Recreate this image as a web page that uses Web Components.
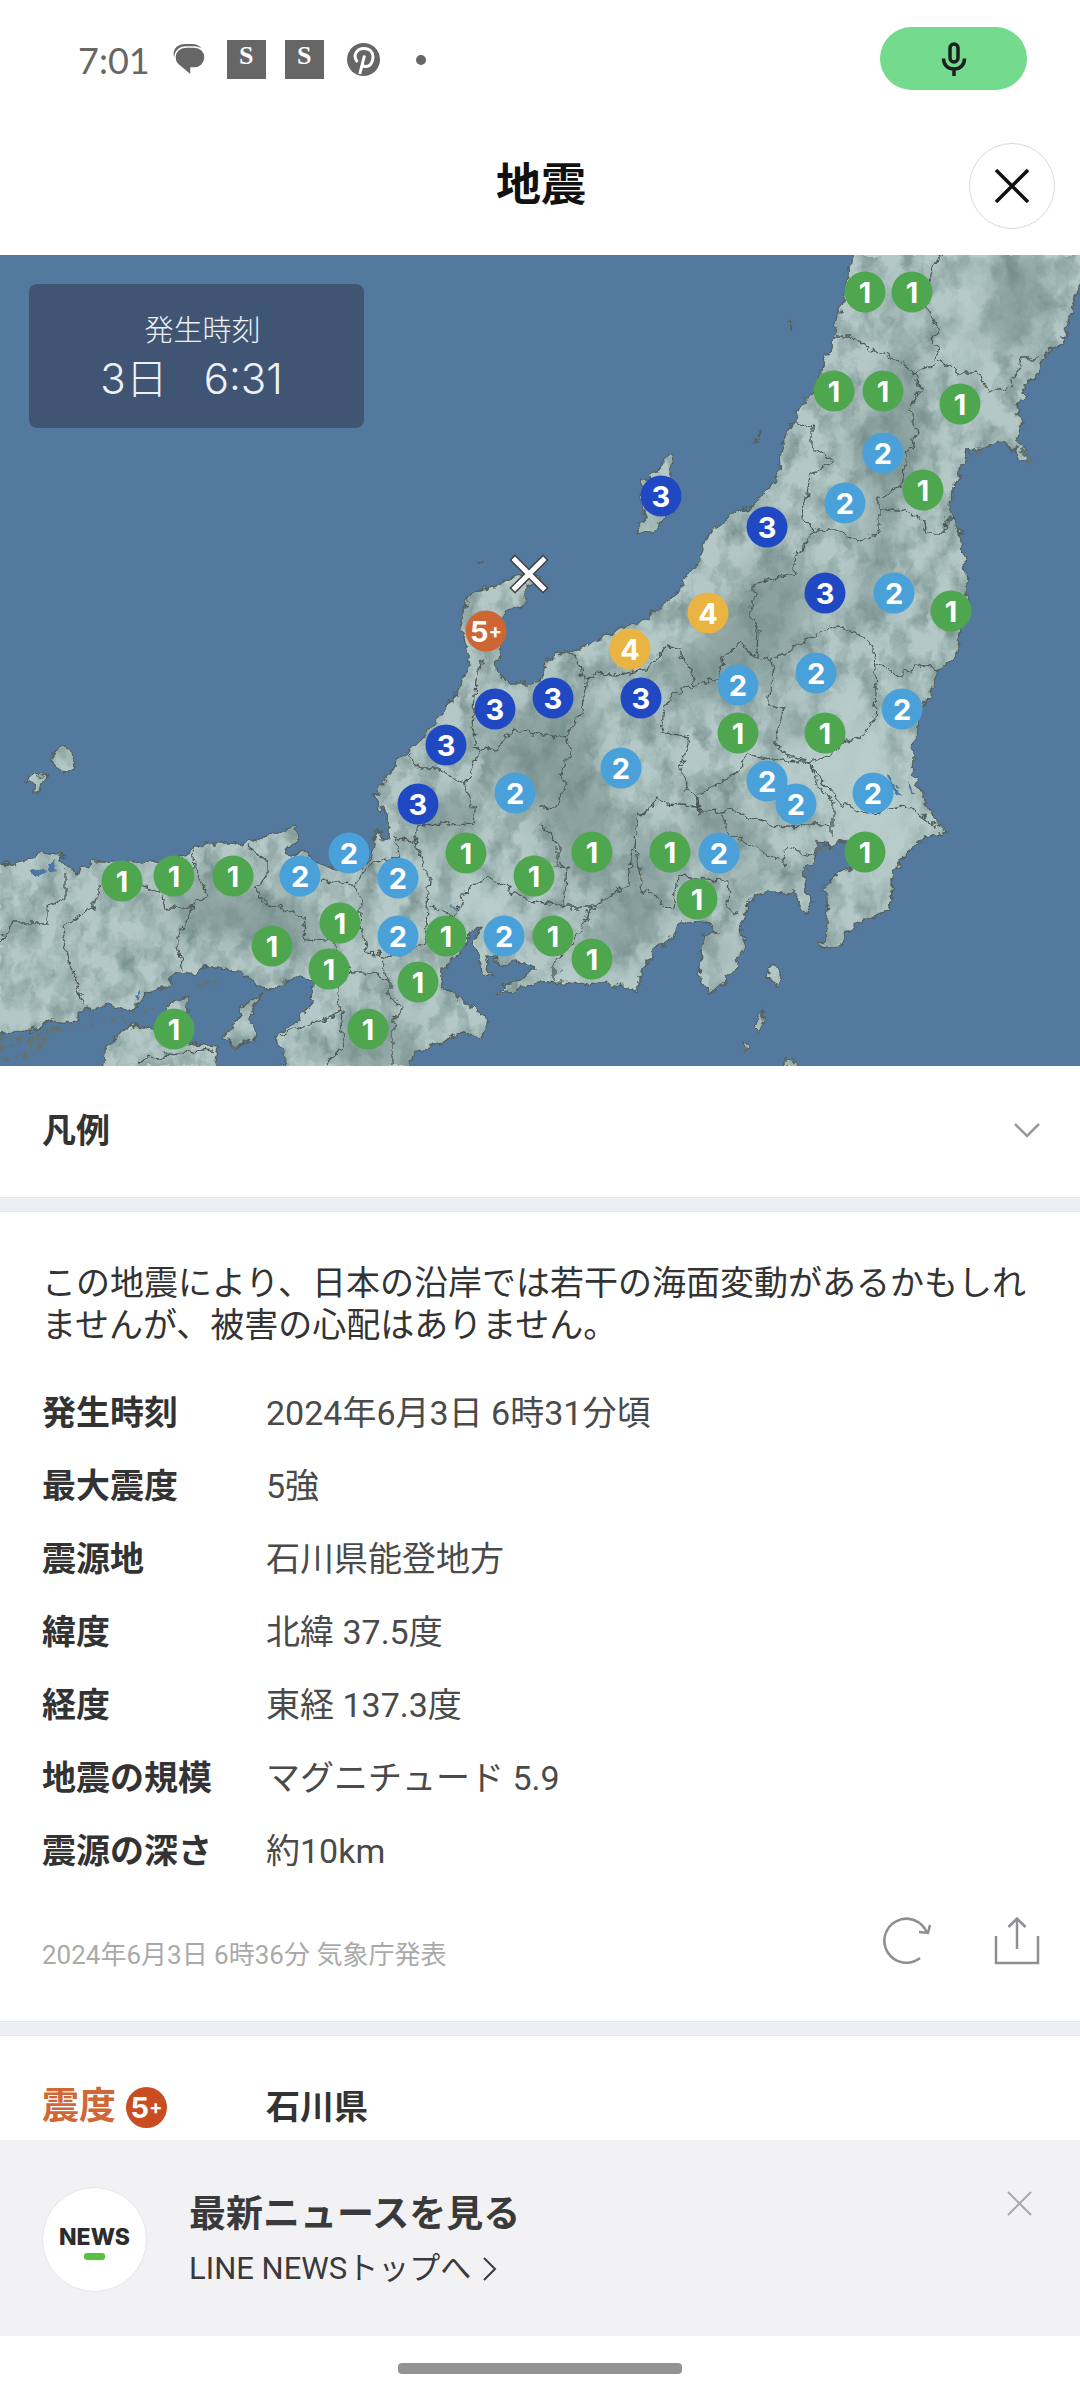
<!DOCTYPE html>
<html lang="ja">
<head>
<meta charset="utf-8">
<meta name="viewport" content="width=device-width, initial-scale=1">
<title>地震</title>
<style>
  body {
    margin: 0;
    background: #fff;
    color: #333;
    font-family: Roboto, "Noto Sans CJK JP", sans-serif;
  }
</style>
</head>
<body>
<quake-app></quake-app>

<script>
// intensity, x, y on the 1080x811 map
const POINTS = [
  ["1", 865, 37], ["1", 912, 37], ["1", 834, 136], ["1", 883, 136], ["1", 960, 149],
  ["2", 883, 198], ["1", 923, 235], ["2", 845, 248], ["3", 661, 241], ["3", 767, 272],
  ["3", 825, 338], ["2", 894, 338], ["1", 951, 356], ["4", 708, 358], ["4", 630, 394],
  ["5+", 486, 376], ["2", 738, 430], ["2", 816, 418], ["2", 902, 454], ["3", 641, 443],
  ["1", 738, 478], ["1", 825, 478], ["3", 553, 443], ["3", 495, 454], ["3", 446, 490],
  ["3", 418, 549], ["2", 515, 538], ["2", 621, 513], ["2", 767, 526], ["2", 796, 549],
  ["2", 873, 538], ["1", 865, 597], ["1", 122, 626], ["1", 174, 621], ["1", 233, 621],
  ["2", 300, 621], ["2", 349, 598], ["2", 398, 623], ["1", 466, 598], ["1", 534, 621],
  ["1", 592, 597], ["1", 670, 597], ["2", 719, 598], ["1", 697, 644], ["1", 340, 668],
  ["2", 398, 681], ["1", 446, 681], ["2", 504, 681], ["1", 553, 681], ["1", 592, 704],
  ["1", 272, 691], ["1", 329, 714], ["1", 418, 727], ["1", 174, 774], ["1", 368, 774]
];

const LEVEL_COLORS = { "1": "#4ea64e", "2": "#4aa1da", "3": "#2048c2", "4": "#e9b442", "5+": "#ce6634" };

const DETAILS = [
  ["発生時刻", "2024年6月3日 6時31分頃"],
  ["最大震度", "5強"],
  ["震源地", "石川県能登地方"],
  ["緯度", "北緯 37.5度"],
  ["経度", "東経 137.3度"],
  ["地震の規模", "マグニチュード 5.9"],
  ["震源の深さ", "約10km"]
];

class StatusBar extends HTMLElement {
  constructor() {
    super();
    this.attachShadow({ mode: "open" }).innerHTML = `
      <style>
        :host { display: flex; align-items: center; justify-content: space-between; height: 117px; padding: 0 53px 0 78px; box-sizing: border-box; color: #666; }
        .left { display: flex; align-items: center; padding-top: 2px; }
        time { font: 36px/40px Lato, sans-serif; margin-right: 23px; }
        svg { display: block; }
        .chat { margin-right: 22px; }
        .app { width: 39px; height: 39px; margin-right: 19px; background: #666; color: #fff; font: 900 26px/32px "Liberation Serif", serif; text-align: center; }
        .pin { margin: 0 36px 0 4px; }
        .dot { width: 10px; height: 10px; border-radius: 50%; background: #666; }
        .mic { display: flex; align-items: center; justify-content: center; width: 147px; height: 63px; border-radius: 32px; background: #73da8e; }
      </style>
      <div class="left">
        <time>7:01</time>
        <svg class="chat" width="32" height="31" viewBox="0 0 32 31">
          <path d="M1 13C-1 6 4 0 12 0h7q6 0 9 4" fill="#666"/>
          <path d="M13 3h8c6.500 0 11 4.500 11 10.500S27.500 24 21 24h-3v7.500L5.500 21C3 19 2 16.500 2 13.500 2 7.500 6.500 3 13 3z" fill="#666" stroke="#fff" stroke-width="1.500"/>
        </svg>
        <span class="app">S</span><span class="app">S</span>
        <svg class="pin" width="33" height="33" viewBox="0 0 33 33">
          <circle cx="16.500" cy="16.500" r="16.500" fill="#666"/>
          <path d="M10.500 19C5 12 10 5.500 17 5.500c6 0 9 4 9 8.500 0 5.500-3 9.500-7.200 9.500-2 0-3.300-1-3.800-2.200M17.500 12.500L12.800 31" fill="none" stroke="#fff" stroke-width="3"/>
        </svg>
        <i class="dot"></i>
      </div>
      <div class="mic">
        <svg width="26" height="36" viewBox="0 0 26 36" fill="none" stroke="#1c1f22" stroke-width="3.500">
          <rect x="9" y="3" width="8" height="18" rx="4"/>
          <path d="M2.500 17.500C2.500 24 7 28 13 28s10.500-4 10.500-10.500M13 28v7"/>
        </svg>
      </div>`;
  }
}
customElements.define("status-bar", StatusBar);

class PageHeader extends HTMLElement {
  constructor() {
    super();
    this.attachShadow({ mode: "open" }).innerHTML = `
      <style>
        :host { display: grid; grid-template-columns: 86px 1fr 86px; align-items: center; height: 138px; padding: 0 25px 0 27px; box-sizing: border-box; }
        h1 { grid-column: 2; margin: 0; font-size: 45px; line-height: 60px; text-align: center; color: #111; }
        button { width: 86px; height: 86px; padding: 0; border: 1px solid #d9d9d9; border-radius: 50%; background: #fff; }
        svg { display: block; margin: auto; }
      </style>
      <h1><slot></slot></h1>
      <button aria-label="閉じる">
        <svg width="34" height="34" viewBox="0 0 34 34" stroke="#111" stroke-width="3.500"><path d="M1 1l32 32M33 1L1 33"/></svg>
      </button>`;
  }
}
customElements.define("page-header", PageHeader);

class QuakePin extends HTMLElement {
  constructor() {
    super();
    this.attachShadow({ mode: "open" });
  }

  connectedCallback() {
    const level = this.getAttribute("level");
    const color = this.getAttribute("color") || LEVEL_COLORS[level];
    this.shadowRoot.innerHTML = `
      <style>
        :host { display: flex; align-items: center; justify-content: center; width: 41px; height: 41px; border-radius: 50%; background: ${color}; color: #fff; font: 700 29px/41px Inter, sans-serif; }
        small { font-size: 20px; }
      </style>
      ${level[0]}${level[1] ? `<small>${level[1]}</small>` : ""}`;
  }
}
customElements.define("quake-pin", QuakePin);

class QuakeMap extends HTMLElement {
  constructor() {
    super();
    this.attachShadow({ mode: "open" });
  }

  connectedCallback() {
    const pins = POINTS.map(([level, x, y]) =>
      `<quake-pin level="${level}" style="left:${(x / 10.8).toFixed(2)}%;top:${(y / 8.11).toFixed(2)}%"></quake-pin>`
    ).join("");

    this.shadowRoot.innerHTML = `
      <style>
        :host { display: block; position: relative; aspect-ratio: 1080 / 811; overflow: hidden; background: #53799f; }
        .map { display: block; width: 100%; height: 100%; }
        quake-pin { position: absolute; transform: translate(-50%, -50%); }
        .time { position: absolute; left: 29px; top: 29px; width: 335px; height: 144px; padding: 22px 0; box-sizing: border-box; border-radius: 8px; background: #405573; color: #edf1f5; text-align: center; }
        .time p { margin: 0; font: 300 29px/44px "Noto Sans CJK JP", sans-serif; padding-left: 12px; }
        .time div { display: flex; justify-content: center; gap: 36px; font: 300 42px/58px Inter, "Noto Sans CJK JP", sans-serif; padding-right: 10px; }
      </style>
      ${this.land()}
      ${pins}
      <div class="time"><p>発生時刻</p><div><span>3日</span><span>6:31</span></div></div>`;
  }

  land() {
    return `
      <svg class="map" viewBox="0 255 1080 811" aria-hidden="true">
        <defs>
          <filter id="rough" x="0" y="255" width="1080" height="811" filterUnits="userSpaceOnUse" color-interpolation-filters="sRGB">
            <feTurbulence type="fractalNoise" baseFrequency=".11" numOctaves="3" seed="4" result="n"/>
            <feDisplacementMap in="SourceGraphic" in2="n" scale="11" xChannelSelector="R" yChannelSelector="G"/>
          </filter>
          <filter id="relief" x="0" y="255" width="1080" height="811" filterUnits="userSpaceOnUse" color-interpolation-filters="sRGB">
            <feTurbulence type="fractalNoise" baseFrequency=".05 .035" numOctaves="5" seed="9"/>
            <feColorMatrix values="0 0 0 0 .42  0 0 0 0 .52  0 0 0 0 .51  1.6 0 0 0 -.6"/>
          </filter>
          <filter id="soft" x="-50%" y="-50%" width="200%" height="200%" color-interpolation-filters="sRGB"><feGaussianBlur stdDeviation="12"/></filter>
          <g id="shapes">
            <path d="M852 240V255L845 300 837 315 833 337 822 370 812 393 800 407 794 422 784 438 780 457 779 473 771 488 755 505 733 515 710 532 704 547 699 560 688 573 679 590 657 610 640 624 621 627 602 638 574 650 555 655 545 660 543 675 538 683 510 683 498 673 496 663 501 655 503 640 503 620 508 610 525 605 527 598 524 587 538 583 540 576 525 575 510 578 496 587 480 591 465 600 463 613 458 625 465 637 468 657 468 667 461 683 451 703 437 720 420 740 408 753 394 760 391 773 380 785 375 795 380 807 389 820 389 838 382 842 379 830 374 833 375 847 370 857 361 867 344 870 322 867 313 857 303 850 289 858 286 852 298 838 293 827 275 832 253 843 207 843 193 850 172 860 131 862 93 862 77 872 67 868 57 857 65 855 41 852 34 858 17 862 -20 868V1033L31 1030 52 1020 72 1022 84 1010 110 1005 131 1013 148 993 169 987 172 975 193 973 207 967 227 967 241 973 258 985 272 988 286 982 305 976 313 983 312 1002 300 1018 274 1037 279 1048 286 1057 274 1080H404L413 1053 437 1043 465 1032 482 1038 486 1018 472 1007 455 995 443 988 443 970 458 953 468 940 472 930 482 927 473 943 480 960 482 973 491 977 486 957 496 957 499 967 517 962 534 967 527 977 506 985 499 995 540 983 561 982 588 985 612 983 638 992 638 977 647 963 654 950 673 938 679 920 709 922 717 933 704 933 701 953 699 977 710 992 726 982 738 962 746 947 740 923 746 917 747 902 764 893 795 893 800 905 803 917 814 902 805 890 803 873 815 860 817 843 833 845 850 842 852 867 833 875 822 890 828 900 826 940 817 941 828 950 840 948 845 933 864 920 883 915 892 903 891 877 905 853 926 837 948 833 936 823 922 793 912 767 912 750 917 740 917 727 926 703 933 683 939 670 957 655 961 630 967 600 964 557 960 533 952 513 953 487 965 463 967 450 1001 442 1015 450 1020 463 1029 460 1019 440 1022 420 1017 403 1026 397 1022 387 1038 375 1046 353 1063 343 1070 317 1077 290 1095 270V240z"/>
            <path d="M103 1080L105 1047 124 1030 138 1025 155 1032 193 1045 219 1047 212 1080zM165 1005L188 998V1012L172 1014zM263 993L250 1013 256 1038 234 1048 224 1037 238 1020 244 1005zM669 453L674 457 669 477 678 503 667 517 654 530 638 532 647 517 640 497 643 480 660 468z"/>
            <path d="M62 746l10 7 3 11-6 8-11-1-6-9 3-12zM771 965l7 2 3 12-5 7-7-9zM762 1010l2 14-7 7-2-4zM743 1040l7 6-6 6zM786 1060l8 0 2 8h-10zM791 321l3 4-3 4zM759 431l-1 9-4 3zM478 564l5-2"/>
            <path d="M25 781l8-8 8 3 7-3-9 12 2 5-7 4-1-8z"/>
          </g>
          <mask id="mask" x="0" y="255" width="1080" height="811" maskUnits="userSpaceOnUse"><use href="#shapes" fill="#fff"/></mask>
        </defs>
        <g filter="url(#rough)">
          <use href="#shapes" fill="#b4c9c7"/>
          <g mask="url(#mask)">
            <g fill="#718885" filter="url(#soft)" opacity=".6">
              <path d="M1000 255l50 0-20 100-50-20zM905 310l15 60 5 90-30 50-15 120-25 0 20-130-30-60 40-40z"/>
              <path d="M760 560l50 10-10 70-40 40-80 30-10-40 50-50zM560 680l30 10-10 120-40 20-30-100z"/>
              <path d="M580 700l30 120 0 80-50-30-20-80zM630 820l30 20 10 70-60 60-30-20 50-60zM700 790l60 40-10 30-60-10z"/>
              <path d="M430 800l50-10-10 40-50 20zM180 880l120 20 30 50-60 0-100-30zM740 870l30 10-10 20-30-10zM790 690l-20 60 30-10z"/>
              <path d="M350 1040l60-20-10 50-80 0zM480 700l30 20 40 60-50 10zM708 940l20 0-10 40z"/>
            </g>
            <rect y="255" width="1080" height="811" filter="url(#relief)"/>
            <g fill="#b9cecc" filter="url(#soft)" opacity=".9">
              <path d="M965 255l20 0-10 140-20-10zM850 680l30 60 40 80-40 80-50-80-60-70 60-20zM450 870l50 20 20 60-40-10zM370 900l20-5 0 50-25 0zM545 970l90 0 0 15-90 5z"/>
            </g>
          </g>
          <use href="#shapes" fill="none" stroke="#55615f" stroke-width="1.500"/>
          <g fill="none" stroke="#4c5957" stroke-width="1.300">
            <path d="M941 255L929 273 927 310 938 327 933 340 939 353 933 365 912 373M833 337L853 337 874 350 895 357 914 373 921 388 910 410 917 435 905 457 902 487 879 497V533L859 542 840 530 815 530 803 517 810 475 833 462 812 447V428L795 422"/>
            <path d="M939 362L960 373 977 373 988 392 1012 385 1022 357 1040 357M879 510L900 510 924 520 927 533 945 533 946 518 954 518M815 530L795 557 797 575 778 577 753 585V603L748 615 758 627 757 658 771 660 788 650 815 635 836 627 857 632 874 648 876 693 874 720 860 738 846 740 826 757 809 763 774 758 747 755 736 773 697 795"/>
            <path d="M771 660L774 677 767 703 784 708 774 740 784 753 809 763 815 780 833 803V837M812 768L840 803 867 815 905 805 946 833M876 665L890 670 900 678 917 665 939 670"/>
            <path d="M700 813L697 795 686 790 681 767 688 737 661 732 664 710 674 693 693 687 719 677 726 655 741 643 757 658M697 795L700 807 664 805 657 798 650 812 638 813 635 840 642 890 657 897 667 910 674 907 678 877 721 880 729 880 728 907 740 915"/>
            <path d="M700 813L729 810 774 827 831 823M719 813L729 833 760 850 784 863 786 847 815 857M571 652L581 667 585 683 583 710 566 738 571 753 561 773 566 790 554 807 540 808M585 683L597 672 616 675 647 670 655 657 667 647 679 650 691 670 693 687"/>
            <path d="M540 823L557 843V867L567 865 564 907 592 907 630 883 631 857 635 840M592 907L574 943 554 963V980M482 660L475 680 472 727 479 747 465 787 475 813 472 823 418 825 415 843 396 838 399 855 370 863 355 885 324 880"/>
            <path d="M410 753L420 770 441 770 465 783M473 747L496 750 513 730 566 738M415 843L429 877 427 907 425 943 399 957 368 953 360 927 362 900 355 885M430 907L455 915 467 887 492 878 520 898 564 907"/>
            <path d="M193 850L196 873 207 893 193 908 165 908 162 893 141 887M193 908L177 937 183 970M250 847L267 860V877L255 887 262 900 303 917 306 940 334 943 350 973 337 977 341 1013 275 1037M341 1013L344 1043 327 1066"/>
            <path d="M65 873V898L48 907V923L14 923 0 940M100 883L93 907 62 927 69 960 83 1003M350 973L372 973 389 980V997L405 1007 393 1020V1066M384 957L389 980M140 1060l45-8 30-2"/>
          </g>
          <g fill="none" stroke="#65736f" stroke-width="5">
            <path d="M0 1038h28l30-10M0 1048l50-8M4 1060l30-6 12-12" stroke-dasharray="6 4 3 5"/>
            <path d="M70 1030l40-10 45-10 30-15M90 1018l40 4" stroke-width="3" stroke-dasharray="4 9 2 6"/>
            <path d="M198 985l18-4M1015 446l18 18M968 455l14-5M816 846l10 2M804 878l6-8" stroke-width="4" stroke-dasharray="5 3"/>
          </g>
          <g fill="#4c76a4"><path d="M30 873l18-4-3 5-14 3zM47 862l7 0 2 9-6-2zM135 996l6-6-3 10zM884 772l5 2 14 24-6-2zM907 780l8 14-4-2zM453 905l4 4-3 2zM559 970l6-3-3 4z"/></g>
        </g>
        <path d="M515 560l28 28M543 560l-28 28" stroke="#444" stroke-width="8" stroke-linecap="square"/>
        <path d="M515 560l28 28M543 560l-28 28" stroke="#fff" stroke-width="5" stroke-linecap="square"/>
      </svg>`;
  }
}
customElements.define("quake-map", QuakeMap);

class LegendToggle extends HTMLElement {
  constructor() {
    super();
    this.attachShadow({ mode: "open" }).innerHTML = `
      <style>
        :host { display: block; }
        button { display: flex; align-items: center; justify-content: space-between; width: 100%; height: 131px; padding: 0 39px 2px 42px; border: 0; background: #fff; color: #333; font: inherit; font-weight: 700; font-size: 34px; line-height: 42px; }
      </style>
      <button aria-expanded="false">
        <slot></slot>
        <svg width="28" height="17" viewBox="0 0 28 17" fill="none" stroke="#999" stroke-width="2.500"><path d="M2 2l12 12L26 2"/></svg>
      </button>`;
  }
}
customElements.define("legend-toggle", LegendToggle);

class QuakeDetail extends HTMLElement {
  constructor() {
    super();
    this.attachShadow({ mode: "open" }).innerHTML = `
      <style>
        :host { display: block; padding: 50px 40px 54px 42px; font-size: 34px; line-height: 42px; }
        p { margin: 0 0 46px; }
        table { border-spacing: 0; }
        th, td { padding: 0 0 31px; text-align: left; }
        th { width: 224px; white-space: nowrap; }
        td { color: #4a4a4a; }
        footer { display: flex; align-items: center; gap: 62px; height: 52px; margin-top: 12px; }
        small { flex: 1; padding-top: 28px; font-size: 26px; line-height: 32px; color: #aaa; }
        button { padding: 0; border: 0; background: none; }
        svg { display: block; }
      </style>
      <p><slot></slot></p>
      <table>
        ${DETAILS.map(([name, value]) => `<tr><th scope="row">${name}</th><td>${value}</td></tr>`).join("")}
      </table>
      <footer>
        <small>2024年6月3日 6時36分 気象庁発表</small>
        <button aria-label="更新">
          <svg width="49" height="48" viewBox="0 0 49 48" fill="none" stroke="#8e8e93" stroke-width="2.500">
            <path d="M37 41A22 22 0 1 1 44 16M36 15l9 1 2-8"/>
          </svg>
        </button>
        <button aria-label="共有">
          <svg width="46" height="48" viewBox="0 0 46 48" fill="none" stroke="#8e8e93" stroke-width="2.500">
            <path d="M2 19v27h42V19M23 32V2M14.500 10L23 1.500 31.500 10"/>
          </svg>
        </button>
      </footer>`;
  }
}
customElements.define("quake-detail", QuakeDetail);

class AreaList extends HTMLElement {
  constructor() {
    super();
    this.attachShadow({ mode: "open" }).innerHTML = `
      <style>
        :host { display: flex; align-items: center; padding: 47px 42px; font-size: 34px; font-weight: 700; line-height: 48px; }
        .level { display: flex; align-items: center; gap: 10px; width: 224px; font-size: 37px; color: #d06736; }
      </style>
      <span class="level">震度<quake-pin level="5+" color="#c94d20"></quake-pin></span>
      <slot></slot>`;
  }
}
customElements.define("area-list", AreaList);

class NewsBanner extends HTMLElement {
  constructor() {
    super();
    this.attachShadow({ mode: "open" }).innerHTML = `
      <style>
        :host { display: flex; align-items: center; height: 196px; padding: 2px 42px 0; box-sizing: border-box; background: #f2f2f5; color: #3a3a3a; }
        a { display: flex; flex: 1; align-items: center; gap: 42px; color: inherit; text-decoration: none; }
        .logo { display: flex; flex-direction: column; align-items: center; justify-content: center; width: 105px; height: 105px; padding-top: 2px; box-sizing: border-box; border: 1px solid #e5e5e7; border-radius: 50%; background: #fff; font: 800 23px/32px Inter, sans-serif; color: #2c2c2c; }
        .logo::after { content: ""; width: 21px; height: 7px; border-radius: 3px; background: #58c140; }
        .text { display: grid; gap: 6px; padding-top: 6px; font-size: 31px; line-height: 48px; }
        strong { font-size: 37px; }
        .more { display: flex; align-items: center; gap: 12px; }
        button { align-self: flex-start; margin: 49px 6px 0 0; padding: 0; border: 0; background: none; }
        svg { display: block; }
      </style>
      <a href="#news">
        <span class="logo">NEWS</span>
        <span class="text">
          <strong>最新ニュースを見る</strong>
          <span class="more">LINE NEWSトップへ
            <svg width="14" height="24" viewBox="0 0 14 24" fill="none" stroke="#3a3a3a" stroke-width="2"><path d="M1 1l11 11L1 23"/></svg>
          </span>
        </span>
      </a>
      <button aria-label="バナーを閉じる">
        <svg width="25" height="25" viewBox="0 0 25 25" stroke="#aaa" stroke-width="2"><path d="M1 1l23 23M24 1L1 24"/></svg>
      </button>`;
  }
}
customElements.define("news-banner", NewsBanner);

class QuakeApp extends HTMLElement {
  constructor() {
    super();
    this.attachShadow({ mode: "open" }).innerHTML = `
      <style>
        :host { display: flex; flex-direction: column; height: 100vh; }
        main { flex: 1; min-height: 0; overflow: hidden; }
        hr { height: 13px; margin: 0; border: 1px solid #e7e7eb; border-width: 1px 0; background: #eeeff4; }
        nav { display: flex; align-items: center; justify-content: center; height: 64px; }
        nav i { width: 284px; height: 11px; border-radius: 4px; background: #939393; }
      </style>
      <main>
        <status-bar></status-bar>
        <page-header>地震</page-header>
        <quake-map></quake-map>
        <legend-toggle>凡例</legend-toggle>
        <hr>
        <quake-detail>この地震により、日本の沿岸では若干の海面変動があるかもしれませんが、被害の心配はありません。</quake-detail>
        <hr>
        <area-list>石川県</area-list>
      </main>
      <news-banner></news-banner>
      <nav><i></i></nav>`;
  }
}
customElements.define("quake-app", QuakeApp);
</script>
</body>
</html>
